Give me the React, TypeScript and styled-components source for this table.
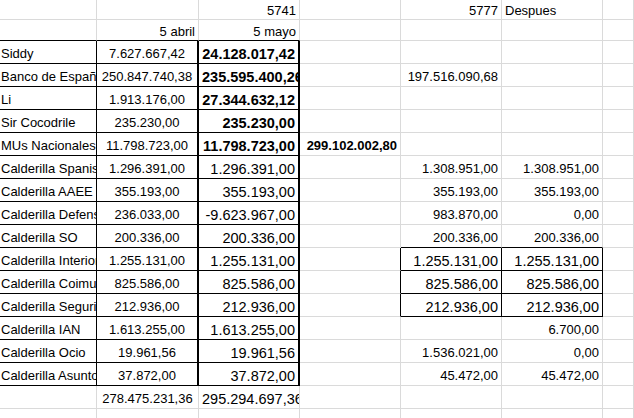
import * as React from "react";
import styled, { createGlobalStyle } from "styled-components";

type Align = "left" | "center" | "right";

type CellSpec = {
  text?: string;
  align?: Align;
  bold?: boolean;
  big?: boolean;
  right?: string; // right border
  bottom?: string; // bottom border
};

const GRID = "1px solid #dadada";
const BLACK = "1px solid #000";
const THICK = "2px solid #000";

// 15 bordered rows: label, 5 abril, 5 mayo, D, E, F
const rows: [string, string, string, string, string, string][] = [
  ["Siddy", "7.627.667,42", "24.128.017,42", "", "", ""],
  ["Banco de España", "250.847.740,38", "235.595.400,26", "", "197.516.090,68", ""],
  ["Li", "1.913.176,00", "27.344.632,12", "", "", ""],
  ["Sir Cocodrile", "235.230,00", "235.230,00", "", "", ""],
  ["MUs Nacionales", "11.798.723,00", "11.798.723,00", "299.102.002,80", "", ""],
  ["Calderilla Spanish", "1.296.391,00", "1.296.391,00", "", "1.308.951,00", "1.308.951,00"],
  ["Calderilla AAEE", "355.193,00", "355.193,00", "", "355.193,00", "355.193,00"],
  ["Calderilla Defensa", "236.033,00", "-9.623.967,00", "", "983.870,00", "0,00"],
  ["Calderilla SO", "200.336,00", "200.336,00", "", "200.336,00", "200.336,00"],
  ["Calderilla Interior", "1.255.131,00", "1.255.131,00", "", "1.255.131,00", "1.255.131,00"],
  ["Calderilla Coimun", "825.586,00", "825.586,00", "", "825.586,00", "825.586,00"],
  ["Calderilla Seguridad", "212.936,00", "212.936,00", "", "212.936,00", "212.936,00"],
  ["Calderilla IAN", "1.613.255,00", "1.613.255,00", "", "", "6.700,00"],
  ["Calderilla Ocio", "19.961,56", "19.961,56", "", "1.536.021,00", "0,00"],
  ["Calderilla Asuntos", "37.872,00", "37.872,00", "", "45.472,00", "45.472,00"],
];

const BOLD_ROWS = 5; // first rows bold in "5 mayo"
const BOX_START = 9; // Interior .. Seguridad boxed in E/F
const BOX_END = 11;

const buildGrid = (): CellSpec[][] => {
  const grid: CellSpec[][] = [];

  grid.push([
    {},
    {},
    { text: "5741", align: "right" },
    {},
    { text: "5777", align: "right" },
    { text: "Despues", align: "left" },
    {},
  ]);

  grid.push([
    { bottom: BLACK },
    { text: "5 abril", align: "right", bottom: BLACK },
    { text: "5 mayo", align: "right", bottom: BLACK },
    {},
    {},
    {},
    {},
  ]);

  rows.forEach(([label, abril, mayo, d, e, f], i) => {
    const boxed = i >= BOX_START && i <= BOX_END;
    const aboveBox = i === BOX_START - 1;
    grid.push([
      { text: label, align: "left", right: BLACK, bottom: BLACK },
      { text: abril, align: "center", right: THICK, bottom: BLACK },
      { text: mayo, align: "right", bold: i < BOLD_ROWS, big: true, right: THICK, bottom: BLACK },
      { text: d, align: "right", bold: true, right: boxed ? BLACK : undefined },
      { text: e, align: "right", big: boxed, right: boxed ? BLACK : undefined, bottom: boxed || aboveBox ? BLACK : undefined },
      { text: f, align: "right", big: boxed, right: boxed ? BLACK : undefined, bottom: boxed || aboveBox ? BLACK : undefined },
      {},
    ]);
  });

  grid.push([
    {},
    { text: "278.475.231,36", align: "center" },
    { text: "295.294.697,36", align: "right", big: true },
    {},
    {},
    {},
    {},
  ]);

  grid.push([{}, {}, {}, {}, {}, {}, {}]);

  return grid;
};

const App = () => {
  const grid = buildGrid();

  return (
    <>
      <GlobalStyle />
      <SSheet>
        {grid.map((row, r) =>
          row.map((cell, c) => (
            <SCell
              key={`${r}-${c}`}
              $align={cell.align ?? "left"}
              $bold={!!cell.bold}
              $big={!!cell.big}
              $header={r < 2}
              $right={cell.right ?? GRID}
              $bottom={cell.bottom ?? GRID}
            >
              <SText>{cell.text}</SText>
            </SCell>
          ))
        )}
      </SSheet>
    </>
  );
};

export default App;

const GlobalStyle = createGlobalStyle`
  html, body {
    margin: 0;
    padding: 0;
    background: #fff;
    overflow: hidden;
  }
  body {
    font-family: "Liberation Sans", Arial, sans-serif;
    color: #000;
  }
`;

const SSheet = styled.div`
  display: grid;
  grid-template-columns: 97px 102px 101px 101px 101px 101px 1fr;
  grid-template-rows: 20px 21px repeat(15, 23px) 23px 23px;
  width: 634px;
  height: 418px;
  overflow: hidden;
`;

const SCell = styled.div<{
  $align: Align;
  $bold: boolean;
  $big: boolean;
  $header: boolean;
  $right: string;
  $bottom: string;
}>`
  box-sizing: border-box;
  display: flex;
  flex-direction: column;
  justify-content: flex-end;
  overflow: hidden;
  padding: 0 3px ${(p) => (p.$header ? "0" : "1px")};
  border-right: ${(p) => p.$right};
  border-bottom: ${(p) => p.$bottom};
  text-align: ${(p) => p.$align};
  font-size: ${(p) => (p.$big ? "14.5px" : "13px")};
  font-weight: ${(p) => (p.$bold ? 700 : 400)};
  line-height: 16px;
  white-space: nowrap;

  &:nth-child(7n + 1) {
    padding-left: 1px;
  }
`;

const SText = styled.div``;
